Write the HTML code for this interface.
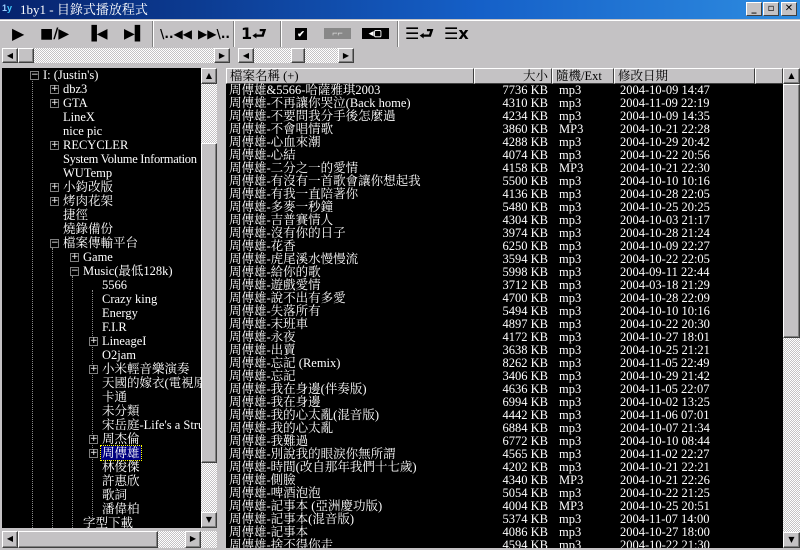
<!DOCTYPE html>
<html><head><meta charset="utf-8">
<style>
*{margin:0;padding:0;box-sizing:border-box}
body{width:800px;height:550px;background:#c4c2c4;position:relative;overflow:hidden;font-family:"Liberation Serif","Noto Serif CJK SC",serif;font-size:12.5px}
.abs{position:absolute}
.title{left:0;top:0;width:800px;height:19px;background:linear-gradient(90deg,#06226c,#1560c8 60%,#2e8ce0);color:#fff;font-size:13px;line-height:19px;padding-left:20px}
.wb{top:2px;width:16px;height:14px;background:#c4c2c4;border:1px solid;border-color:#fff #404040 #404040 #fff;font:bold 10px "DejaVu Sans",sans-serif;text-align:center;line-height:12px;color:#000}
.raised{background:#c4c2c4;border:1px solid;border-color:#fff #404040 #404040 #fff;box-shadow:inset -1px -1px #808080}
.track{background:repeating-conic-gradient(#fff 0 25%,#c4c2c4 0 50%) 0 0/2px 2px}
.arr{font:8px "DejaVu Sans",sans-serif;text-align:center;line-height:13px;color:#000}
.sep{width:2px;height:26px;top:21px;border-left:1px solid #808080;border-right:1px solid #fff}
.tb{top:23px;font:bold 16px "DejaVu Sans",sans-serif;color:#000;line-height:22px}
.tree{left:2px;top:68px;width:199px;height:460px;background:#000;overflow:hidden}
.ti{position:absolute;color:#fff;white-space:nowrap;line-height:14px;height:14px}
.box{position:absolute;width:9px;height:9px;border:1px solid #808080;background:#000;color:#fff;font:9px/7px "DejaVu Sans",sans-serif;text-align:center}
.list{left:226px;top:68px;width:557px;height:482px;background:#000;overflow:hidden}
.hd{position:absolute;top:0;height:16px;line-height:14px;border:1px solid;border-color:#fff #404040 #404040 #fff;background:#c4c2c4;color:#000;padding:0 3px;font-size:12.5px}
.row{position:absolute;left:0;height:13px;line-height:13px;color:#fff;white-space:nowrap;width:557px}
.row span{position:absolute}
.c1{left:3px}.c2{right:235px}.c3{left:333px}.c4{left:394px}
</style></head><body>
<div class="abs title">1by1 - 目錄式播放程式</div>
<div class="abs" style="left:2px;top:3px;width:15px;height:13px;color:#9cf;font:bold 9px sans-serif">1<span style="color:#4cf">y</span></div>
<div class="abs wb" style="left:746px">_</div>
<div class="abs wb" style="left:763px">▫</div>
<div class="abs wb" style="left:781px">✕</div>
<div class="abs" style="left:0;top:20px;width:800px;height:1px;background:#fff"></div>

<div class="abs tb" style="left:12px">▶</div>
<div class="abs tb" style="left:40px;font-size:14px">■/▶</div>
<div class="abs tb" style="left:86px;font-size:14px">▐◀</div>
<div class="abs tb" style="left:124px;font-size:14px">▶▌</div>
<div class="abs sep" style="left:152px"></div>
<div class="abs tb" style="left:160px;font-size:12px">\..◀◀</div>
<div class="abs tb" style="left:198px;font-size:12px">▶▶\..</div>
<div class="abs sep" style="left:233px"></div>
<div class="abs tb" style="left:241px">1⮐</div>
<div class="abs sep" style="left:280px"></div>
<div class="abs" style="left:295px;top:28px;width:12px;height:12px;background:#000;color:#fff;font:bold 9px/12px sans-serif;text-align:center">✔</div>
<div class="abs" style="left:324px;top:28px;width:27px;height:11px;background:#888;color:#ddd;font:9px/11px sans-serif;text-align:center">⌐⌐</div>
<div class="abs" style="left:362px;top:28px;width:27px;height:11px;background:#000;color:#fff;font:bold 9px/11px sans-serif;text-align:center">◂▢</div>
<div class="abs sep" style="left:397px"></div>
<div class="abs tb" style="left:405px">☰⮐</div>
<div class="abs tb" style="left:444px">☰x</div>

<div class="abs track" style="left:2px;top:48px;width:228px;height:15px"></div>
<div class="abs raised arr" style="left:2px;top:48px;width:16px;height:15px">◀</div>
<div class="abs raised" style="left:18px;top:48px;width:16px;height:15px"></div>
<div class="abs raised arr" style="left:214px;top:48px;width:16px;height:15px">▶</div>
<div class="abs track" style="left:238px;top:48px;width:115px;height:15px"></div>
<div class="abs raised arr" style="left:238px;top:48px;width:16px;height:15px">◀</div>
<div class="abs raised" style="left:291px;top:48px;width:14px;height:15px"></div>
<div class="abs raised arr" style="left:338px;top:48px;width:16px;height:15px">▶</div>

<div class="abs tree">
<div style="position:absolute;left:30px;top:10px;height:460px;border-left:1px dotted #888"></div>
<div style="position:absolute;left:50px;top:180px;height:280px;border-left:1px dotted #888"></div>
<div style="position:absolute;left:70px;top:208px;height:252px;border-left:1px dotted #888"></div>
<div style="position:absolute;left:90px;top:222px;height:230px;border-left:1px dotted #888"></div>
</div>
<div class="abs" id="tr" style="left:2px;top:68px;width:199px;height:460px;overflow:hidden">
<div class="box" style="left:28px;top:3px">−</div><div class="ti" style="left:41px;top:0">I: (Justin's)</div>
<div class="box" style="left:48px;top:17px">+</div><div class="ti" style="left:61px;top:14px">dbz3</div>
<div class="box" style="left:48px;top:31px">+</div><div class="ti" style="left:61px;top:28px">GTA</div>
<div class="ti" style="left:61px;top:42px">LineX</div>
<div class="ti" style="left:61px;top:56px">nice pic</div>
<div class="box" style="left:48px;top:73px">+</div><div class="ti" style="left:61px;top:70px">RECYCLER</div>
<div class="ti" style="left:61px;top:84px;letter-spacing:-0.3px">System Volume Information</div>
<div class="ti" style="left:61px;top:98px">WUTemp</div>
<div class="box" style="left:48px;top:115px">+</div><div class="ti" style="left:61px;top:112px">小鈞改版</div>
<div class="box" style="left:48px;top:129px">+</div><div class="ti" style="left:61px;top:126px">烤肉花架</div>
<div class="ti" style="left:61px;top:140px">捷徑</div>
<div class="ti" style="left:61px;top:154px">燒錄備份</div>
<div class="box" style="left:48px;top:171px">−</div><div class="ti" style="left:61px;top:168px">檔案傳輸平台</div>
<div class="box" style="left:68px;top:185px">+</div><div class="ti" style="left:81px;top:182px">Game</div>
<div class="box" style="left:68px;top:199px">−</div><div class="ti" style="left:81px;top:196px">Music(最低128k)</div>
<div class="ti" style="left:100px;top:210px">5566</div>
<div class="ti" style="left:100px;top:224px">Crazy king</div>
<div class="ti" style="left:100px;top:238px">Energy</div>
<div class="ti" style="left:100px;top:252px">F.I.R</div>
<div class="box" style="left:87px;top:269px">+</div><div class="ti" style="left:100px;top:266px">LineageI</div>
<div class="ti" style="left:100px;top:280px">O2jam</div>
<div class="box" style="left:87px;top:297px">+</div><div class="ti" style="left:100px;top:294px">小米輕音樂演奏</div>
<div class="ti" style="left:100px;top:308px">天國的嫁衣(電視原聲帶)</div>
<div class="ti" style="left:100px;top:322px">卡通</div>
<div class="ti" style="left:100px;top:336px">未分類</div>
<div class="ti" style="left:100px;top:350px">宋岳庭-Life's a Struggle</div>
<div class="box" style="left:87px;top:367px">+</div><div class="ti" style="left:100px;top:364px">周杰倫</div>
<div class="box" style="left:87px;top:381px">+</div><div class="ti" style="left:99px;top:378px;background:#000080;outline:1px dotted #ff0;padding:0 1px">周傳雄</div>
<div class="ti" style="left:100px;top:392px">林俊傑</div>
<div class="ti" style="left:100px;top:406px">許惠欣</div>
<div class="ti" style="left:100px;top:420px">歌詞</div>
<div class="ti" style="left:100px;top:434px">潘偉柏</div>
<div class="ti" style="left:81px;top:448px">字型下載</div>
</div>
<div class="abs track" style="left:201px;top:68px;width:16px;height:460px"></div>
<div class="abs raised arr" style="left:201px;top:68px;width:16px;height:16px">▲</div>
<div class="abs raised" style="left:201px;top:143px;width:16px;height:320px"></div>
<div class="abs raised arr" style="left:201px;top:512px;width:16px;height:16px">▼</div>
<div class="abs track" style="left:2px;top:531px;width:215px;height:17px"></div>
<div class="abs raised arr" style="left:2px;top:531px;width:16px;height:17px">◀</div>
<div class="abs raised" style="left:18px;top:531px;width:140px;height:17px"></div>
<div class="abs raised arr" style="left:185px;top:531px;width:16px;height:17px">▶</div>

<div class="abs list" id="ls">
<div class="hd" style="left:0;width:248px">檔案名稱 (+)</div>
<div class="hd" style="left:248px;width:78px;text-align:right">大小</div>
<div class="hd" style="left:326px;width:62px">隨機/Ext</div>
<div class="hd" style="left:388px;width:141px">修改日期</div>
<div class="hd" style="left:529px;width:28px"></div>
</div>
<div class="abs track" style="left:783px;top:68px;width:17px;height:482px"></div>
<div class="abs raised arr" style="left:783px;top:68px;width:17px;height:16px">▲</div>
<div class="abs raised" style="left:783px;top:84px;width:17px;height:254px"></div>
<div class="abs raised arr" style="left:783px;top:532px;width:17px;height:16px">▼</div>
<div class="abs" style="left:0;top:548px;width:800px;height:2px;background:#c4c2c4"></div>
<script>
var d=[["&5566-哈薩雅琪2003","7736","mp3","2004-10-09 14:47"],["不再讓你哭泣(Back home)","4310","mp3","2004-11-09 22:19"],["不要問我分手後怎麼過","4234","mp3","2004-10-09 14:35"],["不會唱情歌","3860","MP3","2004-10-21 22:28"],["心血來潮","4288","mp3","2004-10-29 20:42"],["心結","4074","mp3","2004-10-22 20:56"],["二分之一的愛情","4158","MP3","2004-10-21 22:30"],["有沒有一首歌會讓你想起我","5500","mp3","2004-10-10 10:16"],["有我一直陪著你","4136","mp3","2004-10-28 22:05"],["多麥一秒鐘","5480","mp3","2004-10-25 20:25"],["吉普賽情人","4304","mp3","2004-10-03 21:17"],["沒有你的日子","3974","mp3","2004-10-28 21:24"],["花香","6250","mp3","2004-10-09 22:27"],["虎尾溪水慢慢流","3594","mp3","2004-10-22 22:05"],["給你的歌","5998","mp3","2004-09-11 22:44"],["遊戲愛情","3712","mp3","2004-03-18 21:29"],["說不出有多愛","4700","mp3","2004-10-28 22:09"],["失落所有","5494","mp3","2004-10-10 10:16"],["末班車","4897","mp3","2004-10-22 20:30"],["永夜","4172","mp3","2004-10-27 18:01"],["出賣","3638","mp3","2004-10-25 21:21"],["忘記 (Remix)","8262","mp3","2004-11-05 22:49"],["忘記","3406","mp3","2004-10-29 21:42"],["我在身邊(伴奏版)","4636","mp3","2004-11-05 22:07"],["我在身邊","6994","mp3","2004-10-02 13:25"],["我的心太亂(混音版)","4442","mp3","2004-11-06 07:01"],["我的心太亂","6884","mp3","2004-10-07 21:34"],["我難過","6772","mp3","2004-10-10 08:44"],["別說我的眼淚你無所謂","4565","mp3","2004-11-02 22:27"],["時間(改自那年我們十七歲)","4202","mp3","2004-10-21 22:21"],["側臉","4340","MP3","2004-10-21 22:26"],["啤酒泡泡","5054","mp3","2004-10-22 21:25"],["記事本 (亞洲慶功版)","4004","MP3","2004-10-25 20:51"],["記事本(混音版)","5374","mp3","2004-11-07 14:00"],["記事本","4086","mp3","2004-10-27 18:00"],["捨不得你走","4594","mp3","2004-10-22 21:30"]];
var h="";d.forEach(function(r,i){h+='<div class="row" style="top:'+(16+i*13)+'px"><span class="c1">周傳雄-'+r[0].replace(/^-/,'')+'</span><span class="c2">'+r[1]+' KB</span><span class="c3">'+r[2]+'</span><span class="c4">'+r[3]+'</span></div>'});
h=h.replace('周傳雄-&5566','周傳雄&5566');
document.getElementById('ls').insertAdjacentHTML('beforeend',h);
</script>
</body></html>
